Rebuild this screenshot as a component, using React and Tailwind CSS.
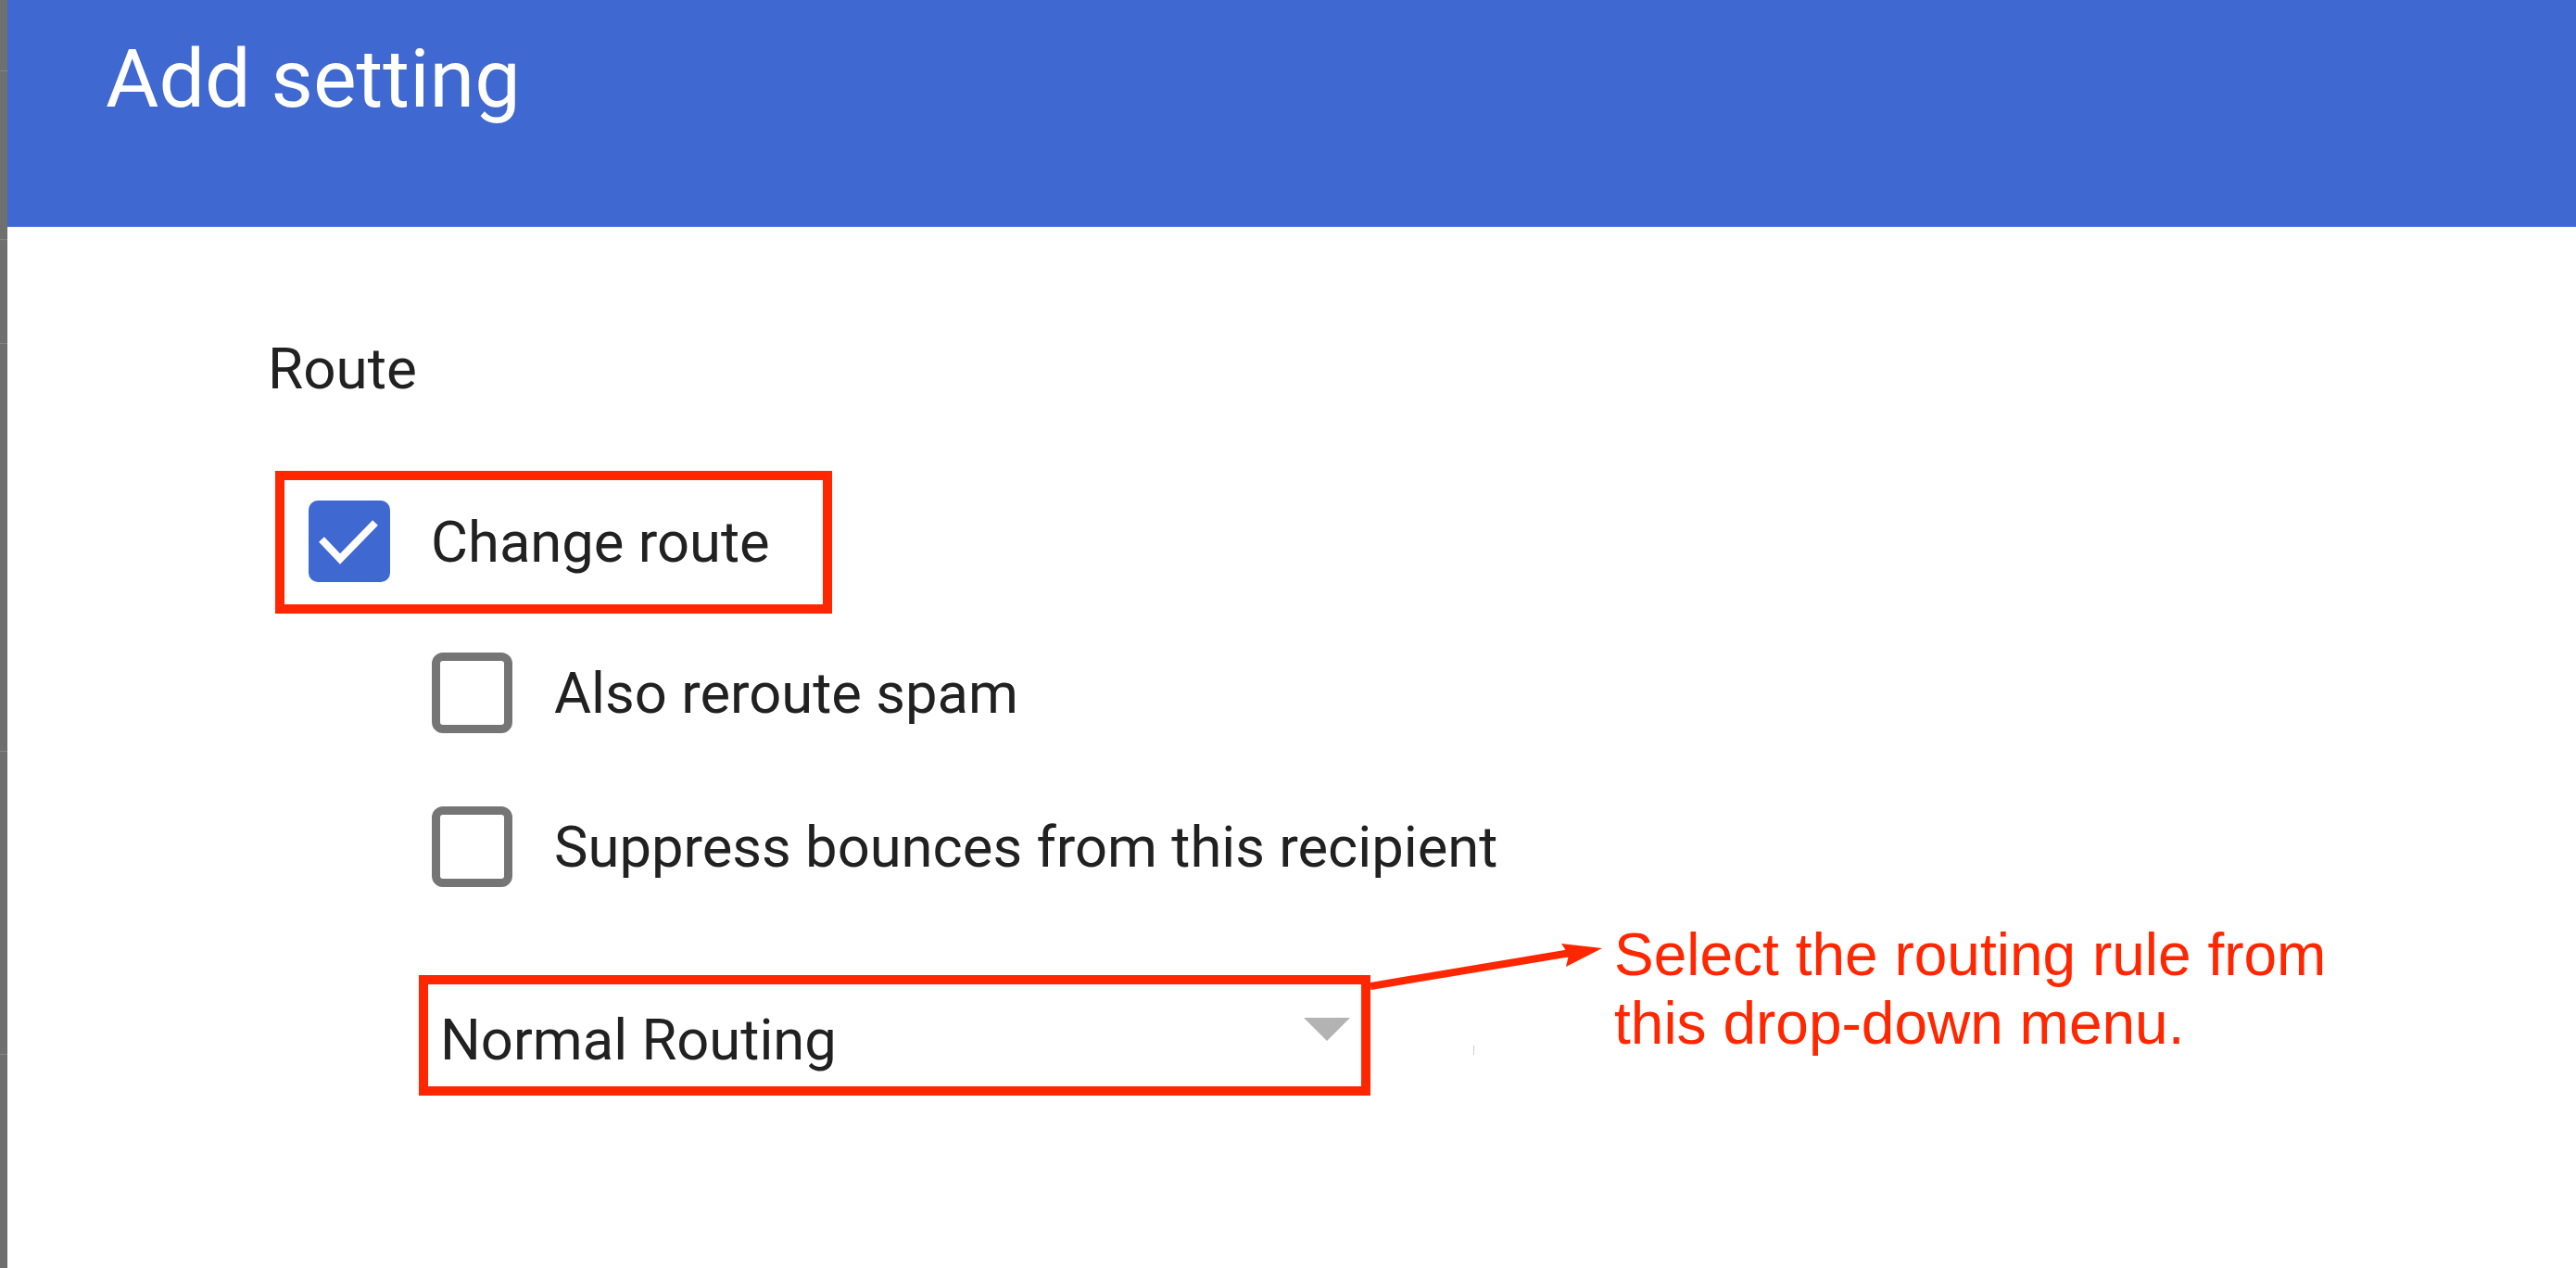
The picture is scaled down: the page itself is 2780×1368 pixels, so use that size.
export default function App() {
  return (
    <div className="flex w-[2780px] h-[1368px] overflow-hidden bg-white font-['Roboto',sans-serif]">
      {/* dimmed background page strip */}
      <div className="w-[8px] shrink-0 flex flex-col bg-[#6f6f6f]">
        <div className="h-[76px]" />
        <div className="h-[1px] bg-[#868686]" />
        <div className="h-[181px]" />
        <div className="h-[1px] bg-[#868686]" />
        <div className="h-[111px]" />
        <div className="h-[1px] bg-[#868686]" />
        <div className="h-[439px]" />
        <div className="h-[1px] bg-[#868686]" />
        <div className="h-[326px]" />
        <div className="h-[1px] bg-[#868686]" />
        <div className="flex-1" />
      </div>

      {/* dialog */}
      <div className="flex-1 flex flex-col">
        <div className="h-[245px] shrink-0 bg-[#3f68d0] border-b border-[#5b7fda] pl-[106px] pt-[41px]">
          <h1 className="text-[88px] leading-none text-white font-normal">Add setting</h1>
        </div>

        <div className="flex flex-col pl-[281px] text-[#212121]">
          <div className="mt-[113px] h-[80px] text-[62px] leading-[80px]">Route</div>

          {/* Change route (highlighted) */}
          <div className="mt-[70px] ml-[8px] w-[601px] h-[154px] border-[10px] border-[#ff2600] flex items-center pl-[26px]">
            <div className="w-[88px] h-[88px] rounded-[10px] bg-[#3f68d0] shrink-0 -mt-[3px]">
              <svg width="88" height="88" viewBox="0 0 88 88">
                <path d="M14 42 L34 63 L72 24" fill="none" stroke="#ffffff" strokeWidth="8" />
              </svg>
            </div>
            <span className="ml-[44px] text-[61.5px] leading-[80px]">Change route</span>
          </div>

          <div className="mt-[42px] ml-[177px] h-[87px] flex items-center">
            <div className="w-[87px] h-[87px] rounded-[12px] border-[9px] border-[#757575] shrink-0" />
            <span className="ml-[45px] text-[61.5px] leading-[80px]">Also reroute spam</span>
          </div>

          <div className="mt-[79px] ml-[177px] h-[87px] flex items-center">
            <div className="w-[87px] h-[87px] rounded-[12px] border-[9px] border-[#757575] shrink-0" />
            <span className="ml-[45px] text-[61.5px] leading-[80px]">Suppress bounces from this recipient</span>
          </div>

          {/* dropdown + annotation */}
          <div className="mt-[95px] ml-[163px] flex items-start">
            <div className="w-[1027px] h-[130px] shrink-0 border-[10px] border-[#ff2600] flex items-start justify-between pl-[13px] pr-[12px]">
              <span className="pt-[10px] text-[61.5px] leading-[100px]">Normal Routing</span>
              <svg className="mt-[36px]" width="50" height="25" viewBox="0 0 50 25">
                <path d="M0 0 L50 0 L25 25 Z" fill="#b3b3b3" />
              </svg>
            </div>
            <svg className="-mt-[50px] shrink-0" width="263" height="140" viewBox="0 0 263 140">
              <line x1="0" y1="62" x2="222" y2="25" stroke="#ff2600" strokeWidth="8" />
              <path d="M250 21 L206 16 L214 28 L211 41 Z" fill="#ff2600" />
              <line x1="111.5" y1="126" x2="111.5" y2="136" stroke="#cfcfcf" strokeWidth="1" />
            </svg>
            <div className="-mt-[59px] font-['Liberation_Sans',Arial,sans-serif] text-[64px] leading-[74px] text-[#ff2600]">
              <div>Select the routing rule from</div>
              <div>this drop-down menu.</div>
            </div>
          </div>
        </div>
      </div>
    </div>
  );
}
